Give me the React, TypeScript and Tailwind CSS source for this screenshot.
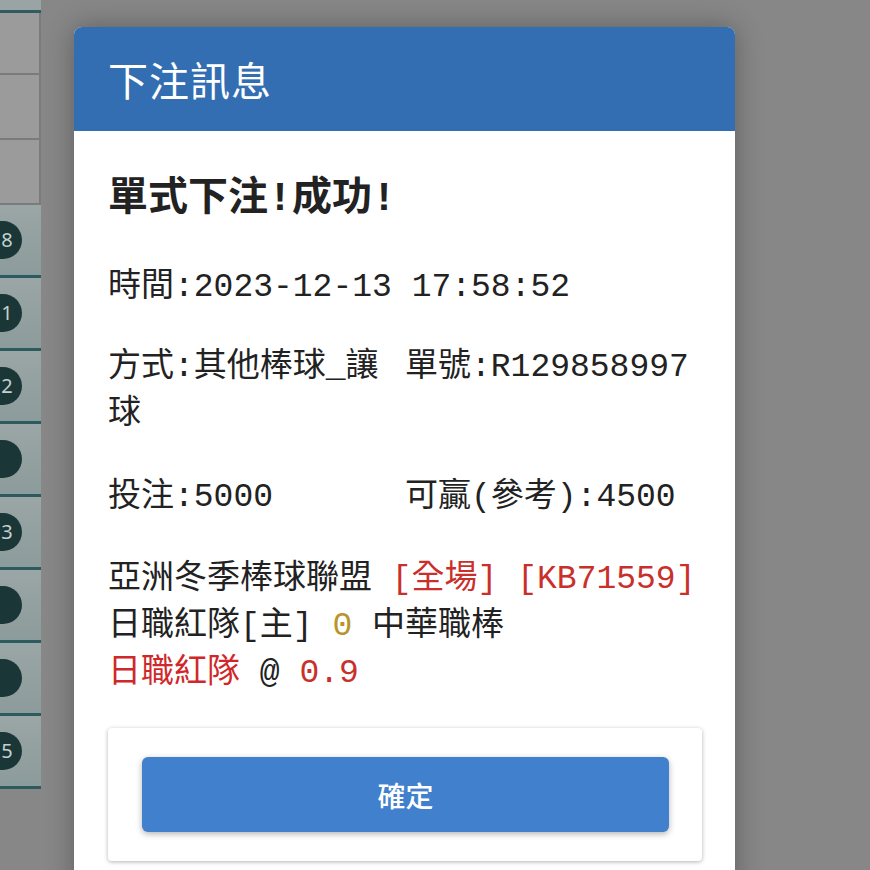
import React from "react";

const mono = "font-['Liberation_Mono','Noto_Sans_CJK_TC',monospace]";
const sans = "font-['Noto_Sans_CJK_TC','Noto_Sans',sans-serif]";

const listRows = ["8", "1", "2", "", "3", "", "", "5"];

function SideList() {
    return (
        <div className="w-[41px] shrink-0 flex flex-col">
            <div className="h-[10px] bg-[#9aa4a4]" />
            <div className="h-[3px] bg-[#2f5d5f]" />
            {[62, 65, 65].map((h, i) => (
                <div
                    key={i}
                    style={{ height: h }}
                    className="bg-[#9b9b9b] border-r-2 border-b-2 border-[#7b7b7b]"
                />
            ))}
            {listRows.map((n, i) => (
                <div
                    key={i}
                    className="h-[73px] flex items-center bg-gradient-to-b from-[#9ba6a6] to-[#8c9b9b] border-b-[3px] border-[#2d5b5d]"
                >
                    <div className="-ml-[24px] w-[46px] h-[38px] shrink-0 rounded-full bg-[#1b3637] flex items-center justify-center text-[20px] text-[#c5d0d0] font-['Noto_Sans',sans-serif]">
                        <span className="pl-[16px]">{n}</span>
                    </div>
                </div>
            ))}
        </div>
    );
}

export default function App() {
    return (
        <div className="w-[870px] h-[870px] overflow-hidden bg-[#878787] flex">
            <SideList />
            <div className="w-[33px] shrink-0" />
            <div className="w-[661px] shrink-0 mt-[27px] h-[900px] bg-white rounded-t-[8px] shadow-[0_0_28px_rgba(0,0,0,0.3)] flex flex-col">
                <div className="h-[104px] bg-[#336eb3] rounded-t-[8px] flex items-center px-[34px]">
                    <h1 className={`${sans} text-[40px] text-white leading-none tracking-[1px]`}>
                        下注訊息
                    </h1>
                </div>
                <div className={`${mono} px-[34px] pr-[33px] text-[#222]`}>
                    <h2 className="pt-[45px] text-[40px] font-bold leading-[48px]">
                        單式下注!成功!
                    </h2>
                    <p className="mt-[40px] text-[33px] leading-[47px]">
                        時間:2023-12-13 17:58:52
                    </p>
                    <div className="mt-[33px] grid grid-cols-2 text-[33px] leading-[47px]">
                        <p>方式:其他棒球_讓球</p>
                        <p>單號:R129858997</p>
                    </div>
                    <div className="mt-[36px] grid grid-cols-2 text-[33px] leading-[47px]">
                        <p>投注:5000</p>
                        <p>可贏(參考):4500</p>
                    </div>
                    <div className="mt-[35px] text-[33px] leading-[47px]">
                        <p>
                            亞洲冬季棒球聯盟{" "}
                            <span className="text-[#c9302c]">[全場]</span>{" "}
                            <span className="text-[#c9302c]">[KB71559]</span>
                        </p>
                        <p>
                            日職紅隊[主] <span className="text-[#b8942c]">0</span> 中華職棒
                        </p>
                        <p>
                            <span className="text-[#d0282a]">日職紅隊</span> @{" "}
                            <span className="text-[#c9302c]">0.9</span>
                        </p>
                    </div>
                    <div className="mt-[31px] rounded-[4px] bg-white shadow-[0_1px_4px_rgba(0,0,0,0.3)] px-[34px] pr-[33px] py-[29px]">
                        <button
                            className={`${sans} w-full h-[75px] rounded-[6px] bg-[#4080cc] text-white text-[28px] font-medium shadow-[0_2px_6px_rgba(0,0,0,0.3)]`}
                        >
                            確定
                        </button>
                    </div>
                </div>
            </div>
        </div>
    );
}
